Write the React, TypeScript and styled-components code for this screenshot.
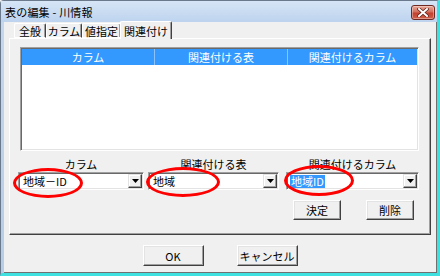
import styled, { createGlobalStyle } from "styled-components";

const GlobalStyle = createGlobalStyle`
  html, body {
    margin: 0;
    padding: 0;
    background: #f0f0f0;
  }
  body {
    font-family: "Noto Sans CJK JP", "Noto Sans", sans-serif;
    font-size: 11px;
    color: #000;
  }
`;

const tabs = [
  { label: "全般", width: 32 },
  { label: "カラム", width: 36 },
  { label: "値指定", width: 39 },
  { label: "関連付け", width: 52, active: true },
];

const columns = [
  { label: "カラム", width: 133 },
  { label: "関連付ける表", width: 133 },
  { label: "関連付けるカラム", width: 130 },
];

const fields = [
  { label: "カラム", value: "地域－ID", width: 128, gap: 0, ring: { left: -6, top: -5, width: 70, height: 30 } },
  { label: "関連付ける表", value: "地域", width: 133, gap: 4, ring: { left: -3, top: -6, width: 74, height: 30 } },
  { label: "関連付けるカラム", value: "地域ID", width: 135, gap: 7, selected: true, ring: { left: -3, top: -8, width: 70, height: 31 } },
];

export default function App() {
  return (
    <>
      <GlobalStyle />
      <Window>
        <TitleBar>
          <Title>表の編集 - 川情報</Title>
          <CloseButton>
            <svg width="12" height="9" viewBox="0 0 12 9">
              <path d="M2 1 L10 8 M10 1 L2 8" stroke="#5a2018" strokeWidth="3.4" strokeLinecap="square" />
              <path d="M2 1 L10 8 M10 1 L2 8" stroke="#fff" strokeWidth="2" strokeLinecap="square" />
            </svg>
          </CloseButton>
        </TitleBar>
        <Client>
          <TabStrip>
            {tabs.map((t) => (
              <Tab key={t.label} $width={t.width} $active={!!t.active}>
                {t.label}
              </Tab>
            ))}
          </TabStrip>
          <TabPanel>
            <ListView>
              <ListHeader>
                {columns.map((c) => (
                  <HeaderCell key={c.label} $width={c.width}>
                    {c.label}
                  </HeaderCell>
                ))}
              </ListHeader>
            </ListView>
            <FieldRow>
              {fields.map((f) => (
                <Field key={f.label} $width={f.width} $gap={f.gap}>
                  <FieldLabel>{f.label}</FieldLabel>
                  <Combo>
                    <ComboText $selected={!!f.selected}>{f.value}</ComboText>
                    <DropButton>
                      <svg width="7" height="4" viewBox="0 0 7 4">
                        <path d="M0 0 H7 L3.5 4 Z" fill="#000" />
                      </svg>
                    </DropButton>
                    <Ring
                      style={{
                        left: f.ring.left,
                        top: f.ring.top,
                        width: f.ring.width,
                        height: f.ring.height,
                      }}
                    />
                  </Combo>
                </Field>
              ))}
            </FieldRow>
            <ActionRow>
              <PushButton $width={48} $height={20}>決定</PushButton>
              <PushButton $width={48} $height={20}>削除</PushButton>
            </ActionRow>
          </TabPanel>
          <DialogButtons>
            <PushButton $width={61} $height={21}>OK</PushButton>
            <PushButton $width={61} $height={21}>キャンセル</PushButton>
          </DialogButtons>
        </Client>
      </Window>
    </>
  );
}

const Window = styled.div`
  width: 440px;
  height: 276px;
  box-sizing: border-box;
  display: flex;
  flex-direction: column;
  background: linear-gradient(to bottom, #c6d8ee, #b7cce6);
  border-left: 1px solid #6a7a8c;
  border-top: 1px solid #6a7a8c;
  border-right: 3px solid #3ee0e0;
  border-bottom: 3px solid #3ee0e0;
  border-top-left-radius: 4px;
`;

const TitleBar = styled.div`
  height: 21px;
  flex: none;
  display: flex;
  align-items: center;
  justify-content: space-between;
  padding: 0 2px 0 4px;
  background: linear-gradient(to bottom, #d6e5f6, #bdd3ee);
`;

const Title = styled.span`
  font-size: 11px;
  color: #000;
  letter-spacing: 0.2px;
`;

const CloseButton = styled.div`
  width: 24px;
  height: 15px;
  box-sizing: border-box;
  margin-top: 2px;
  display: flex;
  align-items: center;
  justify-content: center;
  border: 1px solid #6e2a22;
  border-radius: 3px;
  background: linear-gradient(to bottom, #e8a89a 0%, #d4705f 45%, #c2402e 55%, #d0604a 100%);
  box-shadow: inset 0 0 0 1px rgba(255, 255, 255, 0.35);
`;

const Client = styled.div`
  flex: 1;
  display: flex;
  flex-direction: column;
  margin-left: 3px;
  padding: 0 5px;
  background: #f0f0f0;
  border-right: 1px solid #707070;
  border-bottom: 1px solid #707070;
`;

const TabStrip = styled.div`
  height: 16px;
  flex: none;
  display: flex;
  align-items: flex-end;
  padding-left: 5px;
  position: relative;
  z-index: 1;
`;

const Tab = styled.div<{ $width: number; $active: boolean }>`
  width: ${(p) => p.$width}px;
  height: ${(p) => (p.$active ? 18 : 15)}px;
  box-sizing: border-box;
  margin: ${(p) => (p.$active ? "0 -2px -1px -1px" : "0")};
  display: flex;
  align-items: ${(p) => (p.$active ? "flex-start" : "center")};
  padding-top: ${(p) => (p.$active ? 1 : 0)}px;
  justify-content: center;
  font-size: 11px;
  background: #f0f0f0;
  border-top: 1px solid #fff;
  border-left: 1px solid #fff;
  border-right: 1px solid #404040;
  border-bottom: ${(p) => (p.$active ? "none" : "1px solid #fff")};
  box-shadow: inset -1px 0 0 #a0a0a0;
  border-top-left-radius: 2px;
  border-top-right-radius: 2px;
`;

const TabPanel = styled.div`
  height: 197px;
  flex: none;
  box-sizing: border-box;
  display: flex;
  flex-direction: column;
  padding: 8px 11px 0 10px;
  border: 1px solid;
  border-color: #fff #404040 #404040 #fff;
  box-shadow: inset -1px -1px 0 #a0a0a0;
`;

const ListView = styled.div`
  height: 104px;
  flex: none;
  box-sizing: border-box;
  background: #fff;
  border: 1px solid;
  border-color: #a0a0a0 #fff #fff #a0a0a0;
  box-shadow: inset 1px 1px 0 #696969, inset -1px -1px 0 #e3e3e3;
  padding: 1px;
`;

const ListHeader = styled.div`
  height: 16px;
  display: flex;
  background: #3399ff;
`;

const HeaderCell = styled.div<{ $width: number }>`
  width: ${(p) => p.$width}px;
  box-sizing: border-box;
  display: flex;
  align-items: center;
  justify-content: center;
  color: #fff;
  font-size: 11px;
  border-right: 1px solid #8cc3ff;
  &:last-child {
    flex: 1;
    border-right: none;
  }
`;

const FieldRow = styled.div`
  display: flex;
  margin: 5px 0 0 -2px;
`;

const Field = styled.div<{ $width: number; $gap: number }>`
  width: ${(p) => p.$width}px;
  margin-left: ${(p) => p.$gap}px;
  display: flex;
  flex-direction: column;
`;

const FieldLabel = styled.div`
  height: 16px;
  display: flex;
  align-items: center;
  justify-content: center;
  font-size: 11px;
`;

const Combo = styled.div`
  position: relative;
  height: 18px;
  box-sizing: border-box;
  display: flex;
  align-items: center;
  justify-content: space-between;
  padding: 1px 1px 1px 3px;
  background: #fff;
  border: 1px solid;
  border-color: #a0a0a0 #fff #fff #a0a0a0;
  box-shadow: inset 1px 1px 0 #696969, inset -1px -1px 0 #e3e3e3;
`;

const ComboText = styled.span<{ $selected: boolean }>`
  font-size: 11px;
  line-height: 13px;
  padding: 0 1px;
  color: ${(p) => (p.$selected ? "#fff" : "#000")};
  background: ${(p) => (p.$selected ? "#3399ff" : "transparent")};
`;

const DropButton = styled.div`
  width: 14px;
  height: 14px;
  box-sizing: border-box;
  display: flex;
  align-items: center;
  justify-content: center;
  background: #f0f0f0;
  border: 1px solid;
  border-color: #e3e3e3 #404040 #404040 #e3e3e3;
  box-shadow: inset -1px -1px 0 #a0a0a0, inset 1px 1px 0 #fff;
`;

const Ring = styled.div`
  position: absolute;
  box-sizing: border-box;
  border: 3px solid #ff0000;
  border-radius: 50%;
  pointer-events: none;
`;

const ActionRow = styled.div`
  display: flex;
  justify-content: flex-end;
  gap: 25px;
  margin-top: 10px;
  padding-right: 5px;
`;

const PushButton = styled.div<{ $width: number; $height: number }>`
  width: ${(p) => p.$width}px;
  height: ${(p) => p.$height}px;
  box-sizing: border-box;
  display: flex;
  align-items: center;
  justify-content: center;
  font-size: 11px;
  background: #f0f0f0;
  border: 1px solid;
  border-color: #fff #404040 #404040 #fff;
  box-shadow: inset -1px -1px 0 #a0a0a0, inset 1px 1px 0 #e3e3e3;
`;

const DialogButtons = styled.div`
  display: flex;
  justify-content: center;
  gap: 33px;
  padding-top: 10px;
`;
